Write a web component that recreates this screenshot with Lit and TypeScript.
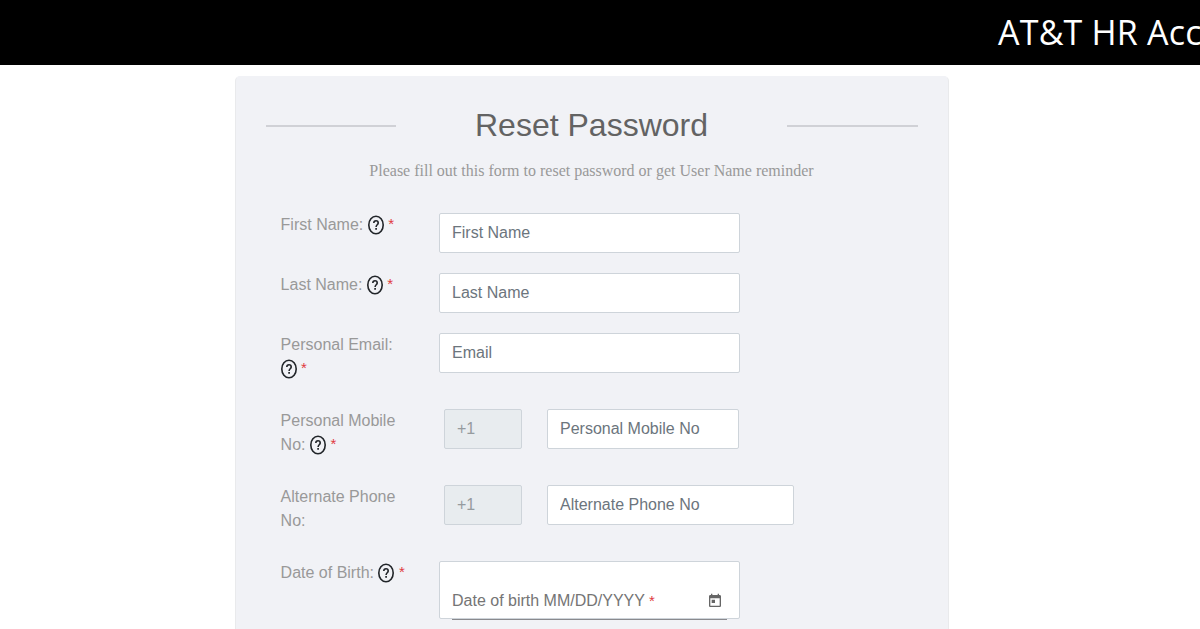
import { LitElement, html, css, nothing } from 'lit';
import { customElement, property } from 'lit/decorators.js';

@customElement('help-icon')
export class HelpIcon extends LitElement {
  static styles = css`
    :host {
      display: inline-block;
      width: 16px;
      height: 20px;
      vertical-align: -5px;
    }
    svg {
      display: block;
    }
  `;

  render() {
    return html`
      <svg width="16" height="20" viewBox="0 0 16 20" fill="none" stroke="#212529">
        <ellipse cx="8" cy="10" rx="7.2" ry="8.7" stroke-width="1.6" />
        <path d="M5.8 8.1C5.8 6.5 6.6 5.8 8 5.8s2.2.8 2.2 2.1c0 1.8-2.1 2-2.1 4.1" stroke-width="1.6" />
        <path d="M8.1 13v1.8" stroke-width="1.7" />
      </svg>
    `;
  }
}

@customElement('form-row')
export class FormRow extends LitElement {
  static styles = css`
    :host {
      display: flex;
      align-items: flex-start;
      margin-bottom: 20px;
    }
    .label {
      box-sizing: border-box;
      flex: none;
      width: 173px;
      padding: 0 30px 8px 14.6px;
      color: #999;
      line-height: 24px;
    }
    .required {
      color: #e0393e;
      font-size: 15px;
      line-height: 16px;
      vertical-align: 1px;
    }
    .control {
      display: flex;
      flex: 1;
    }
  `;

  @property() label = '';
  @property({ type: Boolean }) help = false;
  @property({ type: Boolean }) required = false;

  render() {
    return html`
      <div class="label">
        ${this.label} ${this.help ? html`<help-icon></help-icon>` : nothing}
        ${this.required ? html`<span class="required">*</span>` : nothing}
      </div>
      <div class="control"><slot></slot></div>
    `;
  }
}

@customElement('app-root')
export class AppRoot extends LitElement {
  static styles = css`
    :host {
      display: block;
      height: 629px;
      overflow: hidden;
      background: #fff;
      font-family: 'Liberation Sans', Arial, sans-serif;
      font-size: 16px;
    }
    .banner {
      height: 65px;
      padding-left: 998px;
      box-sizing: border-box;
      overflow: hidden;
      white-space: nowrap;
      background: #000;
      color: #fff;
      font-family: 'Open Sans', 'Noto Sans', sans-serif;
      font-size: 34px;
      letter-spacing: 0.2px;
      line-height: 65px;
    }
    .card {
      box-sizing: border-box;
      width: 714px;
      height: 700px;
      margin: 11px 0 0 235px;
      padding: 30px;
      border: 1px solid #e9eaec;
      border-top-color: #f1f2f6;
      border-radius: 5px;
      background: #f1f2f6;
    }
    .heading {
      display: flex;
      align-items: center;
      justify-content: space-between;
      height: 38px;
    }
    .heading::before,
    .heading::after {
      content: '';
      width: 130px;
      height: 2px;
      background: #d0d1d6;
    }
    .heading::after {
      width: 131px;
    }
    h2 {
      margin: 0 0 1px;
      color: #636363;
      font-size: 32px;
      font-weight: 400;
    }
    .hint {
      margin: 15px 1px 31px 0;
      color: #999;
      font-family: 'Liberation Serif', 'Times New Roman', serif;
      font-size: 16px;
      line-height: 22px;
      text-align: center;
    }
    input {
      box-sizing: border-box;
      height: 40px;
      margin: 0;
      padding: 0 12px;
      border: 1px solid #ced4da;
      border-radius: 2px;
      background: #fff;
      font: inherit;
      outline: none;
    }
    input::placeholder {
      color: #6c757d;
      opacity: 1;
    }
    .wide {
      width: 301px;
    }
    .code {
      width: 78px;
      margin: 0 25px 0 5px;
      background: #e8ecef;
      color: #969b9f;
    }
    .mobile {
      width: 192px;
    }
    .alternate {
      width: 247px;
    }
    .date {
      display: flex;
      align-items: flex-end;
      box-sizing: border-box;
      width: 301px;
      height: 58px;
      padding: 0 12px;
      border: 1px solid #ced4da;
      border-radius: 2px;
      background: #fff;
    }
    .date-line {
      display: flex;
      flex: 1;
      align-items: center;
      justify-content: space-between;
      height: 36px;
      margin-bottom: -2px;
      border-bottom: 1px solid #8a8a8e;
      color: #757575;
    }
    .star {
      color: #e0393e;
      font-size: 15px;
    }
    .calendar {
      margin-right: 4px;
    }
  `;

  render() {
    return html`
      <header class="banner">AT&amp;T HR Access</header>
      <main class="card">
        <div class="heading"><h2>Reset Password</h2></div>
        <p class="hint">Please fill out this form to reset password or get User Name reminder</p>
        <form-row label="First Name:" help required>
          <input class="wide" placeholder="First Name" />
        </form-row>
        <form-row label="Last Name:" help required>
          <input class="wide" placeholder="Last Name" />
        </form-row>
        <form-row label="Personal Email:" help required>
          <input class="wide" placeholder="Email" />
        </form-row>
        <form-row label="Personal Mobile No:" help required>
          <input class="code" value="+1" disabled />
          <input class="mobile" placeholder="Personal Mobile No" />
        </form-row>
        <form-row label="Alternate Phone No:">
          <input class="code" value="+1" disabled />
          <input class="alternate" placeholder="Alternate Phone No" />
        </form-row>
        <form-row label="Date of Birth:" help required>
          <div class="date">
            <div class="date-line">
              <span>Date of birth MM/DD/YYYY <span class="star">*</span></span>
              <svg class="calendar" width="16" height="16" viewBox="0 0 24 24" fill="#666">
                <path d="M19 3h-1V1h-2v2H8V1H6v2H5c-1.11 0-1.99.9-1.99 2L3 19c0 1.1.89 2 2 2h14c1.1 0 2-.9 2-2V5c0-1.1-.9-2-2-2zm0 16H5V8h14v11zM7 10h5v5H7z" />
              </svg>
            </div>
          </div>
        </form-row>
      </main>
    `;
  }
}

declare global {
  interface HTMLElementTagNameMap {
    'app-root': AppRoot;
    'form-row': FormRow;
    'help-icon': HelpIcon;
  }
}
